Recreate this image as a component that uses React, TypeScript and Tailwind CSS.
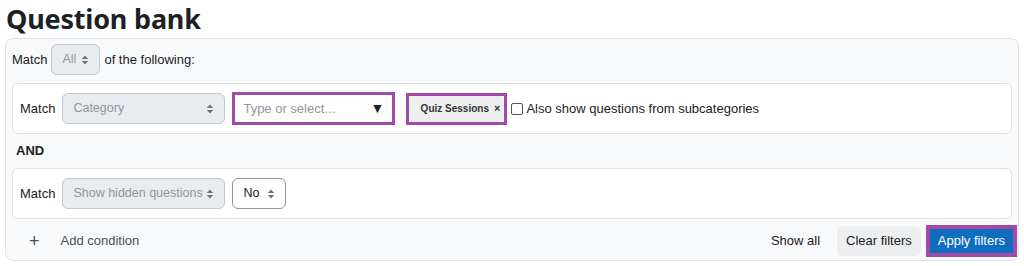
import React from "react";

const TITLE_FONT = { fontFamily: '"Noto Sans", "Open Sans", Arial, sans-serif' };
const FONT = { fontFamily: '"Liberation Sans", Arial, sans-serif' };

const UpDown = ({ color = "#6a737b" }: { color?: string }) => (
  <svg width="8" height="10" viewBox="0 0 8 10" className="shrink-0">
    <path d="M4 0.5 L7.2 4 H0.8 Z" fill={color} />
    <path d="M4 9.5 L7.2 6 H0.8 Z" fill={color} />
  </svg>
);

const Select = ({
  label,
  width,
  disabled,
}: {
  label: string;
  width: string;
  disabled?: boolean;
}) => (
  <div
    className={
      "h-[31px] rounded-md border flex items-center justify-between pl-[10px] pr-[10px] text-[12.5px] whitespace-nowrap " +
      width +
      (disabled
        ? " bg-[#e9ecef] border-[#c4c8cc] text-[#8f959e]"
        : " bg-white border-[#8f959e] text-[#1d2125]")
    }
  >
    <span>{label}</span>
    <UpDown />
  </div>
);

const ConditionBox = ({ children }: { children: React.ReactNode }) => (
  <div className="bg-white border border-[#dee2e6] rounded-md h-[51px] px-[7px] flex items-center gap-[7px]">
    <span className="text-[13px] text-[#1d2125]">Match</span>
    {children}
  </div>
);

export default function App() {
  return (
    <div className="w-full h-[266px] bg-white overflow-hidden" style={FONT}>
      <h2
        className="pl-[6px] h-[37px] text-[27px] font-bold text-[#1d2125] leading-[37px] mb-[1px] tracking-[-0.2px]"
        style={TITLE_FONT}
      >
        Question bank
      </h2>
      <div className="ml-[5px] w-[1014px] h-[223px] border border-[#dee2e6] rounded-lg bg-[#f8f9fa] px-[6px] pt-[5px]">
        {/* Join type */}
        <div className="flex items-center gap-[4px] h-[31px]">
          <span className="text-[13px] text-[#1d2125]">Match</span>
          <Select label="All" width="w-[49px]" disabled />
          <span className="text-[13px] text-[#1d2125]">of the following:</span>
        </div>

        {/* Category condition */}
        <div className="mt-[8px]">
          <ConditionBox>
            <Select label="Category" width="w-[163px]" disabled />
            <div className="w-[163px] h-[33px] border-[3px] border-[#a04ba8] bg-white flex items-center justify-between pl-[8px] pr-[8px] text-[13px] text-[#8f959e]">
              <span>Type or select...</span>
              <span className="text-[#1d2125] text-[14px]">▼</span>
            </div>
            <div className="ml-[4px] w-[101px] h-[32px] border-[3px] border-[#a04ba8] bg-white flex items-stretch">
              <div className="flex-1 bg-[#eceef0] rounded-[3px] flex items-center justify-end pr-[4px] gap-[5px] text-[10px] font-bold text-[#333] whitespace-nowrap">
                <span>Quiz Sessions</span>
                <span className="text-[11px] font-bold">×</span>
              </div>
            </div>
            <label className="flex items-center gap-[2px] text-[13px] text-[#1d2125] -ml-[3px] whitespace-nowrap">
              <span className="w-[12px] h-[12px] border border-[#555] rounded-[2px] bg-white mr-[1px]" />
              Also show questions from subcategories
            </label>
          </ConditionBox>
        </div>

        <div className="h-[34px] flex items-center pl-[4px] text-[13px] font-bold text-[#1d2125]">AND</div>

        {/* Hidden condition */}
        <ConditionBox>
          <Select label="Show hidden questions" width="w-[163px]" disabled />
          <Select label="No" width="w-[54px]" />
        </ConditionBox>

        {/* Footer */}
        <div className="mt-[6px] -mr-[5px] flex items-center h-[32px]">
          <span className="ml-[17px] text-[18px] text-[#4b5055] leading-none font-light">+</span>
          <span className="ml-[21px] text-[13px] text-[#4b5055]">Add condition</span>
          <span className="ml-auto text-[13px] text-[#1d2125]">Show all</span>
          <div className="ml-[17px] h-[30px] px-[9px] rounded-md bg-[#eceef0] flex items-center text-[13px] text-[#1d2125]">
            Clear filters
          </div>
          <div className="ml-[5px] h-[32px] border-[4px] border-[#a04ba8] flex">
            <div className="bg-[#0f6cbf] px-[8px] flex items-center text-[13px] text-white">Apply filters</div>
          </div>
        </div>
      </div>
    </div>
  );
}
